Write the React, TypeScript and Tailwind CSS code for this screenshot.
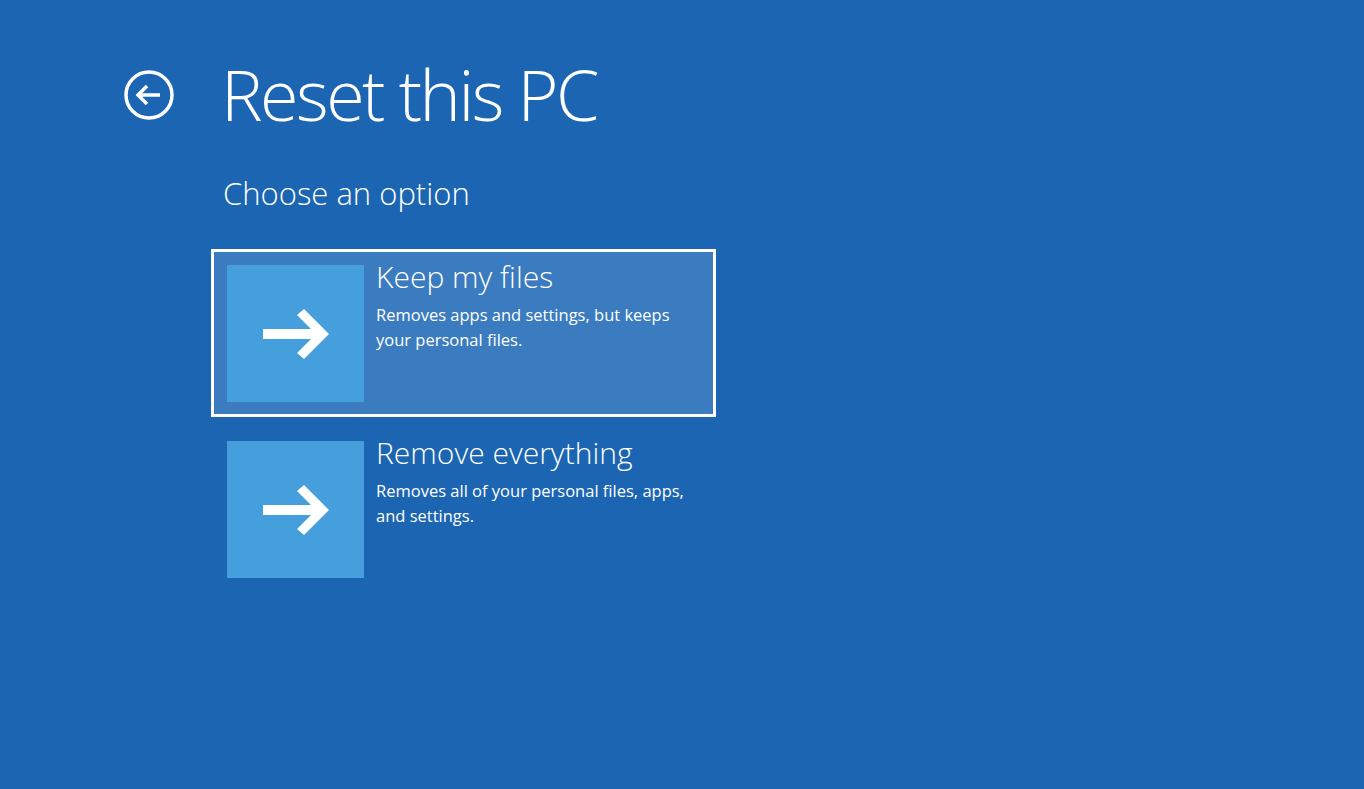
import React from "react";

function Arrow() {
  return (
    <svg width="66" height="50" viewBox="0 0 66 50" fill="none">
      <path d="M0 20 H48 L34 6 L41 0 L66 25 L41 50 L34 44 L48 30 H0 Z" fill="#ffffff" />
    </svg>
  );
}

function Option({ title, desc, selected }: { title: string; desc: string; selected?: boolean }) {
  return (
    <div
      className={
        "flex w-[505px] h-[168px] border-[3px] p-[13px] " +
        (selected ? "border-white bg-[#3b7bc0]" : "border-transparent")
      }
    >
      <div className="w-[137px] h-[137px] shrink-0 bg-[#449fdc] flex items-center justify-center">
        <Arrow />
      </div>
      <div className="ml-[12px] pr-2 text-white">
        <div className="text-[30px] leading-[30px] font-light -mt-[3px]">{title}</div>
        <div className="mt-[10px] text-[16.5px] leading-[25px] max-w-[320px]">{desc}</div>
      </div>
    </div>
  );
}

export default function App() {
  return (
    <div
      className="min-h-screen w-full bg-[#1b65b3] text-white"
      style={{ fontFamily: '"Open Sans", "Noto Sans", sans-serif' }}
    >
      <div className="pl-[124px] pt-[57px]">
        <div className="flex items-center h-[74px]">
          <svg width="50" height="50" viewBox="0 0 50 50" fill="none" className="shrink-0 mt-[2px]">
            <circle cx="25" cy="25" r="23" stroke="#ffffff" strokeWidth="3.5" />
            <path d="M14 25 H36 M23 16 L14 25 L23 34" stroke="#ffffff" strokeWidth="3.5" strokeLinejoin="miter" />
          </svg>
          <h1 className="ml-[47px] text-[70px] leading-none font-light tracking-[-2.5px]">Reset this PC</h1>
        </div>
        <div className="pl-[99px] mt-[47px] text-[31px] leading-none font-light">Choose an option</div>
        <div className="pl-[87px] mt-[40px] flex flex-col gap-[8px]">
          <Option
            selected
            title="Keep my files"
            desc="Removes apps and settings, but keeps your personal files."
          />
          <Option
            title="Remove everything"
            desc="Removes all of your personal files, apps, and settings."
          />
        </div>
      </div>
    </div>
  );
}
